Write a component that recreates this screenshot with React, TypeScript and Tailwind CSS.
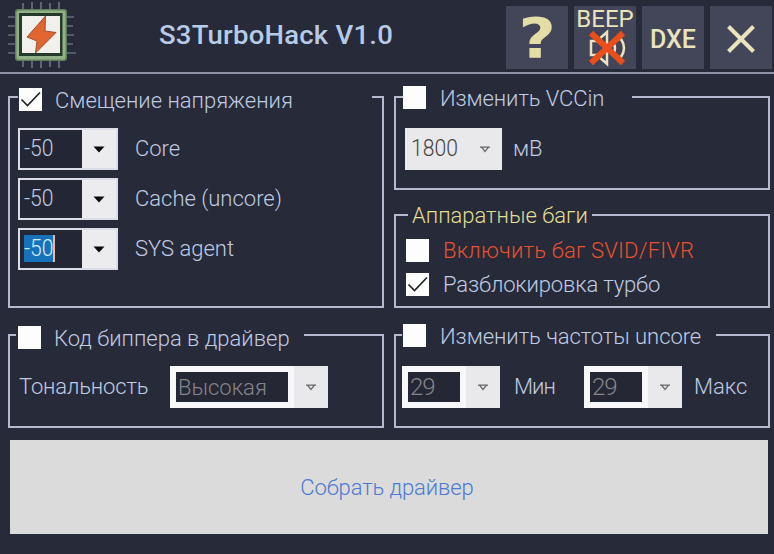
import type { ReactNode } from "react";

function Check({ checked = false, className = "" }: { checked?: boolean; className?: string }) {
  return (
    <span className={`block size-[23px] shrink-0 bg-[#fdfdfd] ${className}`}>
      {checked && (
        <svg viewBox="0 0 23 23" className="size-full" fill="none" stroke="#1c1e26" strokeWidth="1.6">
          <path d="M2.500 11.500 8.500 17.500 21 4.500" />
        </svg>
      )}
    </span>
  );
}

function Label({ children, className = "" }: { children: ReactNode; className?: string }) {
  return <span className={`block h-6 text-[22px] leading-6 font-light whitespace-nowrap ${className}`}>{children}</span>;
}

function Group({ header, className, children }: { header: ReactNode; className: string; children: ReactNode }) {
  return (
    <section className={`border-x-2 border-b-2 border-[#b4b9cf] ${className}`}>
      <header className="-mx-[2px] -mt-3 flex h-6 items-start">{header}</header>
      {children}
    </section>
  );
}

function Rule({ className = "" }: { className?: string }) {
  return <i className={`mt-3 block h-[2px] bg-[#b4b9cf] ${className}`} />;
}

function OffsetCombo({ label, selected = false }: { label: string; selected?: boolean }) {
  return (
    <div className="flex h-[42px] items-center">
      <div className="flex h-[42px] w-[100px] border-2 border-[#dcdde6] bg-[#232735]">
        <div className="flex w-[62px] items-center pl-1">
          <span className={`-mt-[2px] flex h-[27px] items-center text-2xl leading-none font-light ${selected ? "border-r-2 border-[#e8b89a] bg-[#1673b9] text-[#d4ecff]" : ""}`}>
            <span className="w-[29px] origin-left scale-x-[.88]">-50</span>
          </span>
        </div>
        <div className="flex flex-1 items-center justify-center bg-[#ececee]">
          <svg viewBox="0 0 12 7" className="h-[7px] w-3"><path d="M.5.5h11L6 6.500z" fill="#08090c" /></svg>
        </div>
      </div>
      <Label className="ml-[17px]">{label}</Label>
    </div>
  );
}

function DisabledArrow() {
  return (
    <svg viewBox="0 0 10 7" className="h-[7px] w-[10px]" fill="none" stroke="#666" strokeWidth="1.3">
      <path d="M0 1.200h10M1.500 1.200 5 5.400 8.500 1.200" />
    </svg>
  );
}

function DisabledCombo({ value, className, field }: { value: string; className: string; field: string }) {
  return (
    <div className={`flex h-[42px] items-center bg-[#e9e9eb] pr-3 ${className}`}>
      <div className="h-full bg-[#f8f8fa] px-[6px] py-[6px]">
        <div className={`flex h-[30px] items-center overflow-hidden bg-[#252734] pl-[2px] font-light text-[#85858c] ${field}`}>{value}</div>
      </div>
      <div className="flex flex-1 justify-end"><DisabledArrow /></div>
    </div>
  );
}

function ToolButton({ children }: { children: ReactNode }) {
  return <button className="flex h-[63px] w-[62px] flex-col items-center justify-center overflow-hidden bg-[#434559] text-[#e9e4bd]">{children}</button>;
}

function ChipLogo() {
  return (
    <svg viewBox="0 0 80 72" className="h-[72px] w-20">
      <path d="M23 3v64M32 2v66M41 2v66M50 3v64M59 2v66M8 17h66M8 26h65M8 35h66M8 44h65M8 53h68" stroke="#838c9d" strokeWidth="1.200" />
      <rect x="15" y="9" width="52" height="52" rx="3" fill="#5d8056" />
      <rect x="16.500" y="10.500" width="49" height="49" rx="2" fill="#93b088" />
      <rect x="19" y="13" width="43.500" height="43" fill="#243a2b" />
      <rect x="22" y="16" width="38" height="37" fill="#f1f0ec" />
      <path d="M45.500 16 27 37l10 4-1.500 12L56 32.500 45 31z" fill="#e0652f" stroke="#9d5139" strokeWidth="1" />
    </svg>
  );
}

export default function App() {
  return (
    <main className="flex h-[554px] w-[774px] flex-col overflow-hidden bg-[#262a39] font-['Roboto',sans-serif] text-[#c0cbe2]">
      <header className="flex h-[74px] items-start border-b-2 border-[#8f92a5]">
        <ChipLogo />
        <h1 className="mt-[22px] ml-[79px] flex-1 origin-left scale-x-[1.1] text-[25px] leading-7 font-medium tracking-[0.2px] whitespace-nowrap text-[#b7cbe9]">S3TurboHack V1.0</h1>
        <nav className="mt-[6px] mr-[2px] flex gap-[6px]">
          <ToolButton><span className="scale-x-[1.15] font-['DejaVu_Sans',sans-serif] text-[56px] leading-none font-bold text-[#e3dda6]">?</span></ToolButton>
          <ToolButton>
            <span className="text-2xl leading-[22px]">BEEP</span>
            <svg viewBox="0 0 40 38" className="-mt-px ml-1 h-[38px] w-10 shrink-0" fill="none">
              <path d="M4 12h6l10-9v32L10 26H4zM26 13q4 6 0 13M31 10h3q6 9 0 18h-3" stroke="#e9e4bd" strokeWidth="2.500" />
              <path d="M4 4 36 34M36 4 4 34" stroke="#e94e1b" strokeWidth="6" />
            </svg>
          </ToolButton>
          <ToolButton><span className="mt-1 text-[25px] leading-none font-medium">DXE</span></ToolButton>
          <ToolButton>
            <svg viewBox="0 0 28 28" className="mt-[2px] size-7" stroke="#e9e4bd" strokeWidth="4"><path d="M1.500 1.500 26.500 26.500M26.500 1.500 1.500 26.500" /></svg>
          </ToolButton>
        </nav>
      </header>

      <div className="mt-[22px] ml-2 flex gap-[10px]">
        <div className="flex w-[376px] flex-col gap-[26px]">
          <Group className="h-[212px]" header={<>
            <Rule className="w-[10px]" /><Check checked className="mt-1 ml-[1px]" />
            <Label className="mt-[5px] ml-[13px]">Смещение напряжения</Label><Rule className="ml-auto w-3" />
          </>}>
            <div className="mt-5 ml-2 flex flex-col gap-2">
              <OffsetCombo label="Core" />
              <OffsetCombo label="Cache (uncore)" />
              <OffsetCombo label="SYS agent" selected />
            </div>
          </Group>
          <Group className="h-[94px]" header={<>
            <Rule className="w-2" /><Check className="mt-[4px] ml-[2px]" />
            <Label className="mt-[5px] ml-[13px]">Код биппера в драйвер</Label><Rule className="ml-auto w-20" />
          </>}>
            <div className="mt-5 ml-[9px] flex items-center">
              <Label className="w-[151px] tracking-[-0.15px]">Тональность</Label>
              <DisabledCombo value="Высокая" className="w-[158px]" field="w-[112px] text-[22px]" />
            </div>
          </Group>
        </div>

        <div className="flex w-[376px] flex-col">
          <Group className="h-[94px]" header={<>
            <Rule className="w-[9px]" /><Check className="mt-[2px]" />
            <Label className="mt-[3px] ml-[14px] tracking-[-0.1px]">Изменить VCCin</Label><Rule className="ml-auto w-[138px]" />
          </>}>
            <div className="mt-5 ml-[9px] flex items-center">
              <div className="flex h-[42px] w-[97px] items-center justify-between bg-[#e9e9eb] pr-3 pl-[6px] text-[24px] font-light text-[#444]">
                <span className="-mt-[2px] w-[53px] origin-left scale-x-[.88]">1800</span><DisabledArrow />
              </div>
              <Label className="ml-[11px]">мВ</Label>
            </div>
          </Group>
          <Group className="mt-6 h-[94px]" header={<>
            <Rule className="w-[14px]" /><Label className="mt-[2px] ml-1 text-[#e3df93]">Аппаратные баги</Label><Rule className="ml-auto w-[178px]" />
          </>}>
            <div className="mt-3 ml-[10px] flex flex-col gap-[10px]">
              <div className="flex items-center gap-[14px]"><Check /><Label className="pt-px tracking-[0.2px] text-[#e9502f]">Включить баг SVID/FIVR</Label></div>
              <div className="flex items-center gap-[14px]"><Check checked /><Label className="pt-px tracking-[-0.15px]">Разблокировка турбо</Label></div>
            </div>
          </Group>
          <Group className="mt-[26px] h-[94px]" header={<>
            <Rule className="w-2" /><Check className="mt-[2px] ml-[1px]" />
            <Label className="mt-[3px] ml-[14px] tracking-[-0.05px]">Изменить частоты uncore</Label><Rule className="ml-auto w-[54px]" />
          </>}>
            <div className="mt-5 ml-[6px] flex items-center">
              <DisabledCombo value="29" className="w-[98px]" field="w-[52px] text-[24px] tracking-[-1px]" />
              <Label className="ml-[14px] w-[70px] tracking-[-1px]">Мин</Label>
              <DisabledCombo value="29" className="w-[98px]" field="w-[52px] text-[24px] tracking-[-1px]" />
              <Label className="ml-3">Макс</Label>
            </div>
          </Group>
        </div>
      </div>

      <button className="mt-3 ml-[10px] h-[94px] w-[758px] bg-[#dbdbdc] pt-px pr-1 text-[22px] font-light tracking-[-0.1px] text-[#4c7ad0]">Собрать драйвер</button>
    </main>
  );
}
